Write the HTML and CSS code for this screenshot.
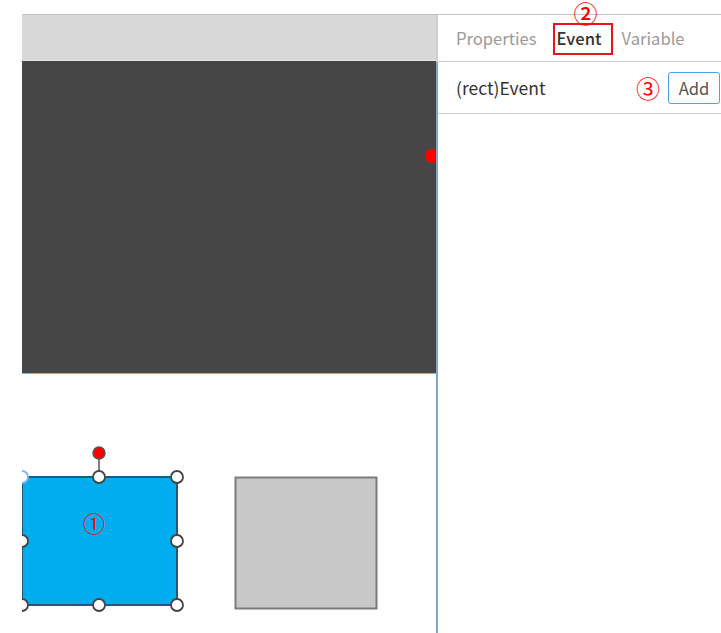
FILE: index.html
```html
<!DOCTYPE html>
<html>
<head>
<meta charset="utf-8">
<link rel="stylesheet" href="styles.css">
</head>
<body>
<div class="app">
  <div class="canvas">
    <div class="toolbar"></div>
    <div class="stage"><span class="port"></span></div>
    <div class="board">
      <svg class="shapes" width="414" height="259" viewBox="0 0 414 259">
        <rect x="0" y="103" width="155" height="128" fill="#00aeef" stroke="#25587a" stroke-width="2"/>
        <line x1="77" y1="80" x2="77" y2="97" stroke="#555" stroke-width="1.5"/>
        <circle cx="77" cy="79" r="6" fill="#f00" stroke="#555" stroke-width="1.5"/>
        <circle cx="0" cy="103" r="6" fill="#fff" stroke="#7db4f5" stroke-width="2"/>
        <circle cx="77" cy="103" r="6" fill="#fff" stroke="#444" stroke-width="1.8"/>
        <circle cx="155" cy="103" r="6" fill="#fff" stroke="#444" stroke-width="1.8"/>
        <circle cx="0" cy="167" r="6" fill="#fff" stroke="#444" stroke-width="1.8"/>
        <circle cx="155" cy="167" r="6" fill="#fff" stroke="#444" stroke-width="1.8"/>
        <circle cx="0" cy="231" r="6" fill="#fff" stroke="#444" stroke-width="1.8"/>
        <circle cx="77" cy="231" r="6" fill="#fff" stroke="#444" stroke-width="1.8"/>
        <circle cx="155" cy="231" r="6" fill="#fff" stroke="#444" stroke-width="1.8"/>
        <text x="72" y="158" text-anchor="middle" class="mark-svg">①</text>
        <rect x="213.5" y="103.5" width="141" height="131" fill="#c8c8c8" stroke="#7c7c7c" stroke-width="2"/>
      </svg>
    </div>
  </div>
  <div class="panel">
    <div class="tabs">
      <span class="tab">Properties</span>
      <span class="tab active">Event<span class="box"></span><span class="mark mark-tab">②</span></span>
      <span class="tab">Variable</span>
    </div>
    <div class="row">
      <span class="label">(rect)Event</span>
      <span class="mark mark-row">③</span>
      <button class="add">Add</button>
    </div>
  </div>
</div>
</body>
</html>
```

FILE: styles.css
```css
html, body {
  margin: 0;
  padding: 0;
  background: #fff;
  overflow: hidden;
}
body {
  font-family: "Noto Sans CJK SC", "Noto Sans", sans-serif;
  width: 721px;
  height: 633px;
}
.app {
  margin: 14px 0 0 22px;
  height: 619px;
  display: flex;
  border-top: 1px solid #c2c2c2;
}
.canvas {
  width: 414px;
  flex: none;
  display: flex;
  flex-direction: column;
  overflow: hidden;
  position: relative;
}
.toolbar {
  height: 45px;
  background: #d8d8d8;
  border-bottom: 1px solid #e6e6e6;
}
.stage {
  height: 312px;
  background: #464646;
  position: relative;
}
.port {
  position: absolute;
  left: 403px;
  top: 88px;
  width: 14px;
  height: 14px;
  border-radius: 50%;
  background: #f00;
}
.board {
  flex: 1;
  border-top: 1px solid #7fb6de;
  position: relative;
  overflow: hidden;
}
.shapes {
  display: block;
}
.mark-svg {
  font-family: "Noto Sans CJK SC", sans-serif;
  font-size: 22px;
  fill: #f00;
}
.panel {
  flex: 1;
  border-left: 2px solid #7fa6c6;
  display: flex;
  flex-direction: column;
  position: relative;
}
.tabs {
  height: 46px;
  display: flex;
  align-items: center;
  padding-left: 19px;
  border-bottom: 1px solid #d0d0d0;
  border-left: 1px solid #fff;
  margin-left: -2px;
  background: #fff;
  position: relative;
}
.tabs::before {
  content: "";
  position: absolute;
  left: -1px;
  top: 0;
  bottom: -1px;
  width: 2px;
  background: #cfcfcf;
}
.tab {
  font-size: 16.6px;
  color: #9a9a9a;
  margin-right: 20px;
  position: relative;
  line-height: 20px;
}
.tab.active {
  color: #333;
  font-weight: 500;
  margin-right: 20px;
}
.box {
  position: absolute;
  left: -4px;
  top: -5px;
  width: 56px;
  height: 28px;
  border: 2px solid #e8141b;
}
.mark {
  color: #f00;
  font-family: "Noto Sans CJK SC", sans-serif;
  line-height: 1;
}
.mark-tab {
  position: absolute;
  left: 17px;
  top: -27px;
  font-size: 24px;
}
.row {
  height: 51px;
  display: flex;
  align-items: center;
  padding: 0 1px 0 18px;
  border-bottom: 1px solid #d0d0d0;
}
.label {
  font-size: 17.5px;
  color: #333;
  flex: 1;
}
.mark-row {
  font-size: 24px;
  margin-right: 8px;
}
.add {
  width: 52px;
  height: 32px;
  border: 1px solid #4da4ea;
  border-radius: 3px;
  background: #fff;
  color: #555;
  font-family: "Noto Sans CJK SC", "Noto Sans", sans-serif;
  font-size: 16.6px;
  padding: 0;
}
```
